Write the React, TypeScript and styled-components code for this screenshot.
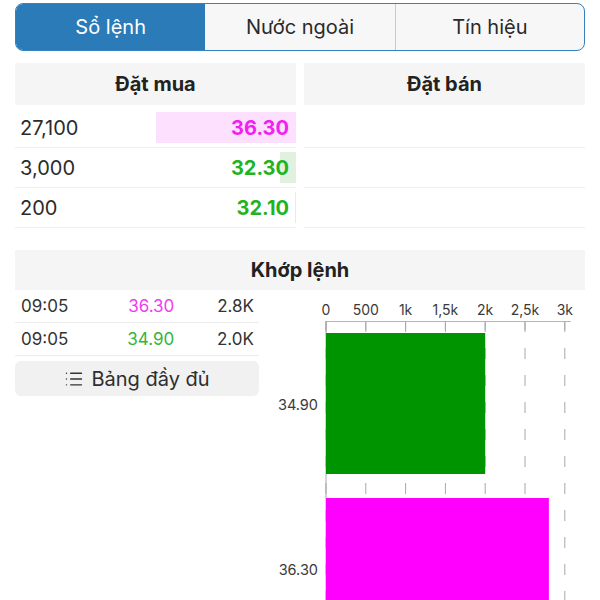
import React from 'react'
import styled, { createGlobalStyle } from 'styled-components'
import { List } from 'lucide-react'

const GlobalStyle = createGlobalStyle`
html, body {
  margin: 0;
  padding: 0;
  overflow: hidden;
  background: #fff;
  font-family: Inter, "Noto Sans", "DejaVu Sans", sans-serif;
  color: #2b2b2b;
}
`

const MAGENTA = '#f21ef2'
const GREEN = '#1fb41f'

const tabs = ['Sổ lệnh', 'Nước ngoài', 'Tín hiệu']

const bids = [
  { vol: 27100, label: '27,100', price: '36.30', color: MAGENTA, bg: '#fde0fd' },
  { vol: 3000, label: '3,000', price: '32.30', color: GREEN, bg: '#e0f1e0' },
  { vol: 200, label: '200', price: '32.10', color: GREEN, bg: '#e0f1e0' },
]

const trades = [
  { time: '09:05', price: '36.30', color: '#f23af2', vol: '2.8K' },
  { time: '09:05', price: '34.90', color: '#36b536', vol: '2.0K' },
]

const maxVol = Math.max(...bids.map(b => b.vol))

// chart geometry (svg coords)
const X0 = 67
const PER_K = 79.6
const TICKS = [
  { v: 0, t: '0' },
  { v: 0.5, t: '500' },
  { v: 1, t: '1k' },
  { v: 1.5, t: '1,5k' },
  { v: 2, t: '2k' },
  { v: 2.5, t: '2,5k' },
  { v: 3, t: '3k' },
]
const bars = [
  { label: '34.90', k: 2.0, color: '#009500', y: 43 },
  { label: '36.30', k: 2.8, color: '#ff00ff', y: 208 },
]

const Chart = () => (
  <ChartSvg width={326} height={400}>
    {TICKS.map(tk => {
      const x = X0 + tk.v * PER_K
      return (
        <g key={tk.t}>
          <text x={x} y={25} textAnchor="middle" fontSize={14} fill="#3a3a3a">{tk.t}</text>
          <line x1={x} y1={31} x2={x} y2={400} stroke="#a8a8a8" strokeWidth={1} strokeDasharray="11 16" />
          <line x1={x} y1={31} x2={x} y2={40} stroke="#a8a8a8" strokeWidth={1} />
        </g>
      )
    })}
    <line x1={X0} y1={31.5} x2={X0 + 3 * PER_K + 6} y2={31.5} stroke="#b5b5b5" strokeWidth={1} />
    <line x1={X0} y1={31} x2={X0} y2={400} stroke="#a8a8a8" strokeWidth={1} />
    {bars.map(b => (
      <g key={b.label}>
        <rect x={X0} y={b.y} width={b.k * PER_K} height={141} fill={b.color} />
        <text x={59} y={b.y + 77} textAnchor="end" fontSize={14.5} fill="#3a3a3a">{b.label}</text>
      </g>
    ))}
  </ChartSvg>
)

const App = () => {
  return (
    <Page>
      <GlobalStyle />
      <Segment>
        {tabs.map((t, i) => (
          <Tab key={t} $active={i === 0} $divider={i > 1}>{t}</Tab>
        ))}
      </Segment>

      <Book>
        <Side>
          <SideHeader>Đặt mua</SideHeader>
          {bids.map(b => (
            <BookRow key={b.label}>
              <Fill style={{ width: `${(b.vol / maxVol) * 50}%`, background: b.bg }} />
              <Vol>{b.label}</Vol>
              <Price $color={b.color}>{b.price}</Price>
            </BookRow>
          ))}
        </Side>
        <Side>
          <SideHeader>Đặt bán</SideHeader>
          <BookRow />
          <BookRow />
          <BookRow />
        </Side>
      </Book>

      <MatchHeader>Khớp lệnh</MatchHeader>
      <Lower>
        <TradeCol>
          {trades.map((t, i) => (
            <TradeRow key={i}>
              <span>{t.time}</span>
              <TradePrice $color={t.color}>{t.price}</TradePrice>
              <TradeVol>{t.vol}</TradeVol>
            </TradeRow>
          ))}
          <FullButton>
            <List size={20} strokeWidth={1.7} color="#333" />
            Bảng đầy đủ
          </FullButton>
        </TradeCol>
        <Chart />
      </Lower>
    </Page>
  )
}

export default App

const Page = styled.div`
padding: 3px 15px 0;
height: 597px;
overflow: hidden;
`
const Segment = styled.div`
display: grid;
grid-template-columns: repeat(3, 1fr);
height: 48px;
box-sizing: border-box;
border: 1.5px solid #3582c0;
border-radius: 8px;
overflow: hidden;
background: #f7f7f7;
`
const Tab = styled.div<{ $active: boolean; $divider: boolean }>`
display: flex;
align-items: center;
justify-content: center;
font-size: 20px;
color: ${p => (p.$active ? '#fff' : '#2a2a2a')};
background: ${p => (p.$active ? '#2a7bb8' : 'transparent')};
border-left: ${p => (p.$divider ? '1px solid #c9c9c9' : 'none')};
`
const Book = styled.div`
display: grid;
grid-template-columns: 1fr 1fr;
gap: 8px;
margin-top: 12px;
`
const Side = styled.div`
display: flex;
flex-direction: column;
`
const SideHeader = styled.div`
height: 42px;
display: flex;
align-items: center;
justify-content: center;
background: #f5f5f5;
font-weight: 700;
font-size: 20px;
color: #222;
margin-bottom: 3px;
`
const BookRow = styled.div`
position: relative;
height: 40px;
box-sizing: border-box;
border-bottom: 1px solid #efefef;
display: flex;
align-items: center;
justify-content: space-between;
padding: 0 7px 0 5px;
`
const Fill = styled.div`
position: absolute;
right: 0;
top: 4px;
bottom: 4px;
`
const Vol = styled.span`
position: relative;
font-size: 20px;
color: #2b2b2b;
`
const Price = styled.span<{ $color: string }>`
position: relative;
font-size: 20px;
font-weight: 700;
color: ${p => p.$color};
`
const MatchHeader = styled.div`
margin-top: 22px;
height: 40px;
display: flex;
align-items: center;
justify-content: center;
background: #f5f5f5;
font-weight: 700;
font-size: 20px;
color: #222;
`
const Lower = styled.div`
display: flex;
`
const TradeCol = styled.div`
width: 244px;
flex-shrink: 0;
display: flex;
flex-direction: column;
`
const TradeRow = styled.div`
height: 33px;
box-sizing: border-box;
border-bottom: 1px solid #ececec;
display: grid;
grid-template-columns: 1fr 1fr 1fr;
align-items: center;
padding: 0 5px 0 6px;
font-size: 17px;
color: #333;
`
const TradePrice = styled.span<{ $color: string }>`
text-align: right;
padding-right: 2px;
color: ${p => p.$color};
`
const TradeVol = styled.span`
text-align: right;
`
const FullButton = styled.div`
margin-top: 5px;
height: 35px;
border-radius: 6px;
background: #f1f1f1;
display: flex;
align-items: center;
justify-content: center;
gap: 7px;
font-size: 20px;
color: #2e2e2e;
`
const ChartSvg = styled.svg`
display: block;
flex-shrink: 0;
font-family: Inter, "Noto Sans", sans-serif;
`
